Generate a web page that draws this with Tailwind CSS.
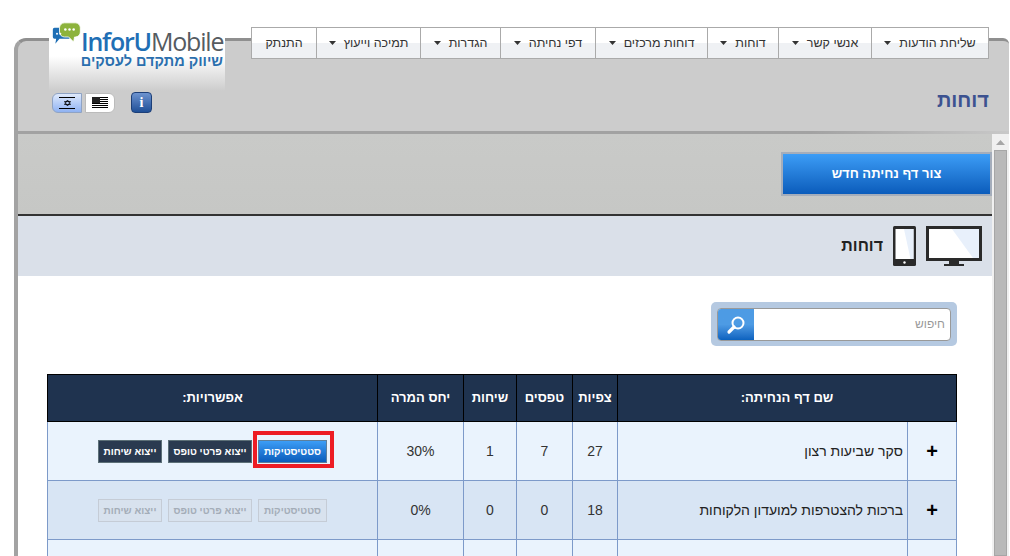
<!DOCTYPE html>
<html lang="he">
<head>
    <meta charset="utf-8">
    <title>דוחות</title>
    <script src="https://cdn.jsdelivr.net/npm/@tailwindcss/browser@4"></script>
</head>

<body class="bg-white font-['Liberation_Sans',Arial,sans-serif] h-[556px] w-[1010px] overflow-hidden">
    <div class="pt-[38px] pl-[14px] pr-px">
        <div class="h-[518px] rounded-tl-[12px] rounded-tr-[6px] bg-[#cccccc] border-t-[3px] border-t-[#8f8f8f] border-l-4 border-l-[#a3a3a3] flex flex-col">

            <!-- header -->
            <div class="h-[90px] shrink-0 flex justify-between pr-[20px]">
                <div class="pl-[31px] -mt-[20px] w-[207px] shrink-0">
                    <div class="h-[70px] w-[176px] bg-gradient-to-b from-white via-white to-[#cccccc] relative pl-[32px] pt-[8px]">
                        <svg class="absolute left-[3px] top-[1px]" width="30" height="25" viewBox="0 0 36 30">
                            <path d="M3 7h17a2 2 0 0 1 2 2v9a2 2 0 0 1-2 2H9l-5 6 1-6H3a2 2 0 0 1-2-2V9a2 2 0 0 1 2-2z" fill="#1f6fb5"/>
                            <path d="M15 1h13a6 6 0 0 1 6 6v5a6 6 0 0 1-6 6h-1l-1 6-6-6h-5a6 6 0 0 1-6-6V7a6 6 0 0 1 6-6z" fill="#8db33c" stroke="#fff"/>
                            <circle cx="16" cy="9" r="1.500" fill="#fff"/><circle cx="21" cy="9" r="1.500" fill="#fff"/><circle cx="26" cy="9" r="1.500" fill="#fff"/>
                            <circle cx="6" cy="14" r="1.200" fill="#fff"/><circle cx="10" cy="14" r="1.200" fill="#fff"/>
                        </svg>
                        <div class="text-[25px] h-[24px] leading-[24px] tracking-[-1.200px] font-['Open_Sans',sans-serif] text-[#555b61] whitespace-nowrap"><span class="text-[#1f6fb5] font-semibold">InforU</span>Mobile</div>
                        <div dir="rtl" class="text-[14.500px] h-[16px] leading-[16px] font-bold text-[#2a6fae] whitespace-nowrap text-right w-[142px]">שיווק מתקדם לעסקים</div>
                    </div>
                    <div class="flex items-center mt-[1px] ml-[3px]">
                        <div class="w-[30px] h-[20px] rounded-l-[6px] border border-[#8fa3c4] bg-gradient-to-b from-[#dfe9fb] to-[#8fb2f2] flex flex-col justify-center items-center gap-[2px]">
                            <div class="w-[16px] h-px bg-black"></div>
                            <svg width="7" height="6" viewBox="0 0 7 6" fill="none" stroke="#000" stroke-width="0.800"><path d="M3.500 0L6.500 4.500H.5z"/><path d="M3.500 6L.5 1.500h6z"/></svg>
                            <div class="w-[16px] h-px bg-black"></div>
                        </div>
                        <div class="w-[30px] h-[20px] ml-[3px] rounded-r-[6px] border border-[#bbbbbb] bg-white flex items-center justify-center">
                            <div class="w-[16px] h-[11px] bg-[repeating-linear-gradient(#000_0,#000_1px,#fff_1px,#fff_2px)] relative"><div class="absolute left-0 top-0 w-[8px] h-[6px] bg-[#222]"></div></div>
                        </div>
                        <div class="w-[21px] h-[21px] ml-[16px] rounded-[4px] border border-[#1d3f78] bg-gradient-to-b from-[#6d93cf] to-[#1f4f97] text-white text-[14px] leading-[19px] font-bold text-center font-['Liberation_Serif',serif]">i</div>
                    </div>
                </div>
                <div class="flex flex-col items-end">
                    <div dir="rtl" class="-mt-[14px] flex h-[32px] bg-gradient-to-b from-white from-50% to-[#eff1f4] to-50% border border-[#aaaaaa] text-[12.500px] text-[#333333] whitespace-nowrap">
                        <div class="w-[117px] flex items-center justify-center gap-[8px] border-l border-[#aaaaaa]">שליחת הודעות <svg width="7" height="4"><path d="M0 0h7L3.500 4z" fill="#333"/></svg></div>
                        <div class="w-[93px] flex items-center justify-center gap-[8px] border-l border-[#aaaaaa]">אנשי קשר <svg width="7" height="4"><path d="M0 0h7L3.500 4z" fill="#333"/></svg></div>
                        <div class="w-[71px] flex items-center justify-center gap-[8px] border-l border-[#aaaaaa]">דוחות <svg width="7" height="4"><path d="M0 0h7L3.500 4z" fill="#333"/></svg></div>
                        <div class="w-[112px] flex items-center justify-center gap-[8px] border-l border-[#aaaaaa]">דוחות מרכזים <svg width="7" height="4"><path d="M0 0h7L3.500 4z" fill="#333"/></svg></div>
                        <div class="w-[95px] flex items-center justify-center gap-[8px] border-l border-[#aaaaaa]">דפי נחיתה <svg width="7" height="4"><path d="M0 0h7L3.500 4z" fill="#333"/></svg></div>
                        <div class="w-[80px] flex items-center justify-center gap-[8px] border-l border-[#aaaaaa]">הגדרות <svg width="7" height="4"><path d="M0 0h7L3.500 4z" fill="#333"/></svg></div>
                        <div class="w-[104px] flex items-center justify-center gap-[8px] border-l border-[#aaaaaa]">תמיכה וייעוץ <svg width="7" height="4"><path d="M0 0h7L3.500 4z" fill="#333"/></svg></div>
                        <div class="w-[64px] flex items-center justify-center">התנתק</div>
                    </div>
                    <div dir="rtl" class="mt-[29px] text-[20px] leading-[24px] font-bold text-[#3c5290]">דוחות</div>
                </div>
            </div>
            <div class="h-[3px] shrink-0 bg-gradient-to-r from-[#a2a2a2] from-80% to-[#c8c8c8]"></div>

            <!-- iframe area -->
            <div class="flex-1 flex min-h-0">
                <div class="w-[974px] shrink-0 bg-white overflow-hidden">
                    <div class="h-[80px] bg-gradient-to-b from-[#c9cac8] to-[#c6c7c5] flex justify-end items-center">
                        <div class="w-[211px] h-[44px] border-2 border-[#a4adbb] bg-gradient-to-b from-[#3c9df6] to-[#0a5cbb] text-white text-[13px] font-bold flex items-center justify-center" dir="rtl">צור דף נחיתה חדש</div>
                    </div>
                    <div class="h-[62px] bg-[#dae0e9] border-t-2 border-[#333333] flex justify-end items-center gap-[10px] pr-[10px]" dir="ltr">
                        <div dir="rtl" class="text-[16px] font-bold text-[#222222]">דוחות</div>
                        <svg width="23" height="40" viewBox="0 0 23 40">
                            <rect width="23" height="40" rx="1.500" fill="#2a2a2a"/>
                            <rect x="2.500" y="3" width="18" height="30" fill="#fff"/>
                            <path d="M11 3h9.500v30h-3z" fill="#e8f0fb"/>
                            <circle cx="11.500" cy="36.500" r="1.200" fill="#fff"/>
                        </svg>
                        <svg width="56" height="40" viewBox="0 0 56 40">
                            <rect width="56" height="35" fill="#2a2a2a"/>
                            <rect x="3" y="3" width="50" height="29" fill="#fff"/>
                            <path d="M26 3h27v29h-6z" fill="#e8f0fb"/>
                            <rect x="23" y="35" width="10" height="3" fill="#2a2a2a"/>
                            <rect x="18" y="38" width="20" height="2" fill="#2a2a2a"/>
                        </svg>
                    </div>
                    <div class="flex justify-end pt-[26px] pr-[35px]">
                        <div class="w-[246px] h-[44px] rounded-[5px] bg-[#b5c9e1] p-[6px]">
                            <div class="h-[33px] rounded-[4px] border border-[#999999] bg-white flex overflow-hidden">
                                <div class="w-[36px] bg-gradient-to-b from-[#4d9be4] from-50% to-[#0a62bf] flex items-center justify-center">
                                    <svg width="20" height="20" viewBox="0 0 20 20" fill="none" stroke="#fff">
                                        <circle cx="12" cy="8" r="5.500" stroke-width="2"/>
                                        <path d="M8 12l-5 5" stroke-width="3.200" stroke-linecap="round"/>
                                    </svg>
                                </div>
                                <div dir="rtl" class="flex-1 pr-[5px] text-[12px] leading-[31px] text-[#999999]">חיפוש</div>
                            </div>
                        </div>
                    </div>

                    <div class="pt-[28px] pl-[29px] relative">
                        <table dir="rtl" class="w-[909px] table-fixed border-collapse text-[14px] text-[#333333] text-center">
                            <colgroup>
                                <col class="w-[49px]"><col class="w-[290px]"><col class="w-[45px]"><col class="w-[56px]"><col class="w-[53px]"><col class="w-[86px]"><col class="w-[330px]">
                            </colgroup>
                            <thead>
                                <tr class="h-[47px] bg-[#1f334f] text-white text-[13px] font-bold">
                                    <th colspan="2" class="border border-black">שם דף הנחיתה:</th>
                                    <th class="border border-black">צפיות</th>
                                    <th class="border border-black">טפסים</th>
                                    <th class="border border-black">שיחות</th>
                                    <th class="border border-black">יחס המרה</th>
                                    <th class="border border-black">אפשרויות:</th>
                                </tr>
                            </thead>
                            <tbody>
                                <tr class="h-[59px] bg-[#eaf3fd]">
                                    <td class="border border-[#7d9ac9] text-[20px] font-bold text-black">+</td>
                                    <td class="border border-[#7d9ac9] text-right pr-[4px] text-[#222222]">סקר שביעות רצון</td>
                                    <td class="border border-[#7d9ac9]">27</td>
                                    <td class="border border-[#7d9ac9]">7</td>
                                    <td class="border border-[#7d9ac9]">1</td>
                                    <td class="border border-[#7d9ac9]">30%</td>
                                    <td class="border border-[#7d9ac9]">
                                        <div class="flex gap-[6px] pr-[50px] text-[10px] font-bold text-white">
                                            <div class="w-[69px] h-[23px] leading-[21px] border border-[#5d7f9c] bg-gradient-to-b from-[#3c9df6] to-[#0a5cbb]">סטטיסטיקות</div>
                                            <div class="w-[84px] h-[23px] leading-[21px] border border-[#5d7078] bg-[#2a3a50]">ייצוא פרטי טופס</div>
                                            <div class="w-[64px] h-[23px] leading-[21px] border border-[#5d7078] bg-[#2a3a50]">ייצוא שיחות</div>
                                        </div>
                                    </td>
                                </tr>
                                <tr class="h-[59px] bg-[#d8e5f4]">
                                    <td class="border border-[#7d9ac9] text-[20px] font-bold text-black">+</td>
                                    <td class="border border-[#7d9ac9] text-right pr-[4px] text-[#222222]">ברכות להצטרפות למועדון הלקוחות</td>
                                    <td class="border border-[#7d9ac9]">18</td>
                                    <td class="border border-[#7d9ac9]">0</td>
                                    <td class="border border-[#7d9ac9]">0</td>
                                    <td class="border border-[#7d9ac9]">0%</td>
                                    <td class="border border-[#7d9ac9]">
                                        <div class="flex gap-[6px] pr-[50px] text-[10px] font-bold text-[#a4adb8]">
                                            <div class="w-[69px] h-[23px] leading-[21px] border border-[#c5ccd6] bg-[#d8e2ee]">סטטיסטיקות</div>
                                            <div class="w-[84px] h-[23px] leading-[21px] border border-[#c5ccd6] bg-[#d8e2ee]">ייצוא פרטי טופס</div>
                                            <div class="w-[64px] h-[23px] leading-[21px] border border-[#c5ccd6] bg-[#d8e2ee]">ייצוא שיחות</div>
                                        </div>
                                    </td>
                                </tr>
                                <tr class="h-[59px] bg-[#eaf3fd]">
                                    <td class="border border-[#7d9ac9]"></td><td class="border border-[#7d9ac9]"></td><td class="border border-[#7d9ac9]"></td><td class="border border-[#7d9ac9]"></td><td class="border border-[#7d9ac9]"></td><td class="border border-[#7d9ac9]"></td><td class="border border-[#7d9ac9]"></td>
                                </tr>
                            </tbody>
                        </table>
                        <!-- red annotation round the stats button -->
                        <div class="absolute left-[235px] top-[85px] w-[81px] h-[37px] border-[4px] border-[#ed1c24] bg-transparent"></div>
                    </div>
                </div>

                <!-- scrollbar -->
                <div class="w-[17px] shrink-0 bg-[#f0f0f0] flex flex-col items-center">
                    <svg class="mt-[6px] mb-[5px]" width="9" height="5"><path d="M4.500 0L9 5H0z" fill="#a6a6a6"/></svg>
                    <div class="w-[13px] flex-1 bg-[#b9b9b9] border border-[#a6a6a6]"></div>
                </div>
            </div>
        </div>
    </div>
</body>
</html>
